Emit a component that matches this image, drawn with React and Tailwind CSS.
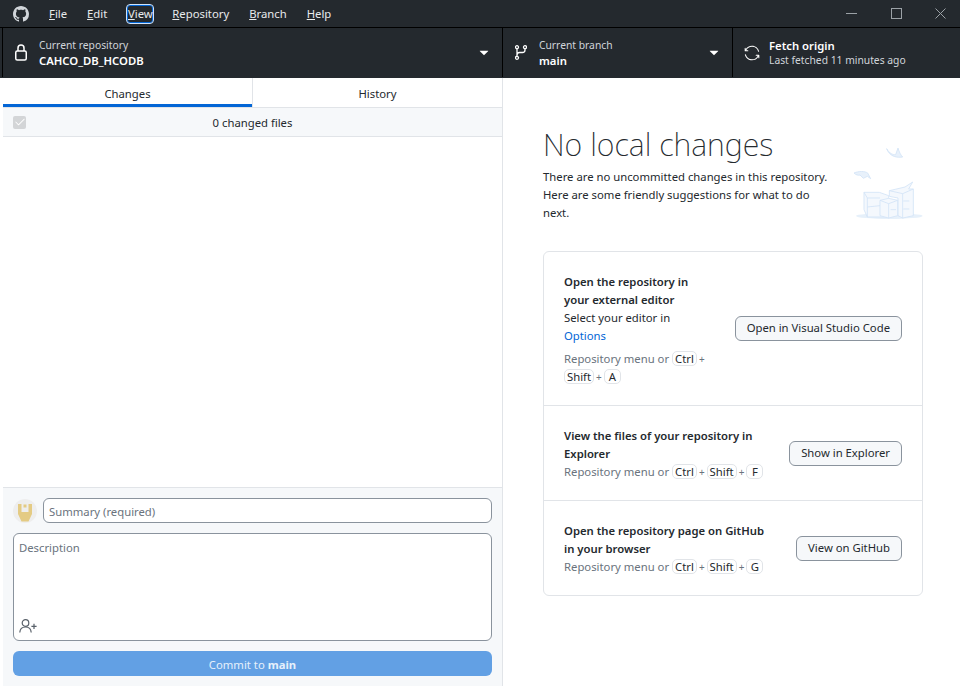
import React from 'react';
import { GoSync, GoTriangleDown, GoCheck } from 'react-icons/go';

const menus = [
  { first: 'F', rest: 'ile', cls: 'ml-[20px]' },
  { first: 'E', rest: 'dit', cls: 'ml-[20px]' },
  { first: 'V', rest: 'iew', cls: 'ml-[19px] w-[28px] h-[20px] justify-center border border-[#cfe3fa] rounded-[4px] shadow-[inset_0_0_0_1px_#0366d6]' },
  { first: 'R', rest: 'epository', cls: 'ml-[18px]' },
  { first: 'B', rest: 'ranch', cls: 'ml-[20px]' },
  { first: 'H', rest: 'elp', cls: 'ml-[20px]' },
];

const Key = ({ children }) => (
  <span className="inline-block min-w-[17px] text-center border border-[#e1e4e8] rounded-[5px] px-[2px] h-[15px] leading-[13px] text-[#24292e] bg-white">
    {children}
  </span>
);

const Plus = () => <span className="mx-[2px] text-[10px] text-[#6a737d]">+</span>;

const Shortcut = ({ keys, wrap }) => (
  <div className="text-[#6a737d] leading-[18px] whitespace-nowrap">
    Repository menu or <Key>Ctrl</Key>
    {keys.map((k, i) => (
      <React.Fragment key={k}>
        <Plus />
        {wrap && i === 0 ? <br /> : null}
        <Key>{k}</Key>
      </React.Fragment>
    ))}
  </div>
);

const Suggestion = ({ title, children, action, width, height, border }) => (
  <div className={`flex items-center justify-between px-[20px] ${height} ${border ? 'border-t border-[#e1e4e8]' : ''}`}>
    <div className={`${width} pt-[2px]`}>
      <div className="font-semibold text-[#24292e] leading-[18px]">{title}</div>
      {children}
    </div>
    <button className="h-[25px] px-[11px] border border-[#8a939d] rounded-[6px] bg-[#f6f8fa] text-[#24292e] whitespace-nowrap">
      {action}
    </button>
  </div>
);

// coordinates follow a 3x view of the drawing
const Illustration = () => (
  <svg width="73" height="80" viewBox="60 40 219 240" fill="none" stroke="#d3e3f6" strokeWidth="2.5" strokeLinejoin="round">
    <ellipse cx="178" cy="259" rx="100" ry="9" fill="#e6f0fa" stroke="none" />
    <path d="M170 57 C178 72 190 76 197 75 L204 55 C208 68 212 76 218 82 C205 84 180 84 170 57Z" fill="#e8f1fb" />
    <path d="M72 130 C85 124 105 124 113 130 L122 147 L112 140 L100 146 L90 136 C85 138 78 136 72 130Z" fill="#e8f1fb" />
    <path d="M102 188 L148 188 L176 198 L176 262 L112 262 L102 240 Z" fill="#f4f8fd" />
    <path d="M102 188 L112 205 L150 205 M112 205 L112 262 M112 232 L150 228" />
    <path d="M178 183 L225 172 L248 157 L236 178 L250 178 L250 258 L218 265 L204 258 L204 205 L178 200 Z" fill="#f4f8fd" />
    <path d="M178 183 L218 192 L250 178 M218 192 L218 265 M220 214 L238 214 M220 238 L238 238" />
    <path d="M150 212 L176 206 L203 212 L203 258 L176 265 L150 258 Z" fill="#f4f8fd" />
    <path d="M150 212 L176 222 L203 212 M176 222 L176 265 M182 240 L198 240" />
  </svg>
);

export default function App() {
  return (
    <div className="w-[960px] h-[686px] overflow-hidden flex flex-col bg-white text-[11.3px] font-['Noto_Sans','Open_Sans',sans-serif]">
      {/* title bar */}
      <div className="h-[27px] shrink-0 bg-[#24292e] flex items-center text-[#e8eaec]">
        <svg viewBox="0 0 16 16" fill="currentColor" className="ml-[13px] w-[16px] h-[16px] text-[#d1d5da]">
          <path d="M8 0C3.58 0 0 3.58 0 8c0 3.54 2.29 6.53 5.47 7.59.4.07.55-.17.55-.38 0-.19-.01-.82-.01-1.49-2.01.37-2.53-.49-2.69-.94-.09-.23-.48-.94-.82-1.13-.28-.15-.68-.52-.01-.53.63-.01 1.08.58 1.23.82.72 1.21 1.87.87 2.33.66.07-.52.28-.87.51-1.07-1.78-.2-3.64-.89-3.64-3.95 0-.87.31-1.59.82-2.15-.08-.2-.36-1.02.08-2.12 0 0 .67-.21 2.2.82.64-.18 1.32-.27 2-.27.68 0 1.36.09 2 .27 1.53-1.04 2.2-.82 2.2-.82.44 1.1.16 1.92.08 2.12.51.56.82 1.27.82 2.15 0 3.07-1.87 3.75-3.65 3.95.29.25.54.73.54 1.48 0 1.07-.01 1.93-.01 2.2 0 .21.15.46.55.38A8.013 8.013 0 0016 8c0-4.42-3.58-8-8-8z" />
        </svg>
        {menus.map((m) => (
          <span key={m.first} className={`${m.cls} flex items-center`}>
            <span className="pt-[1px]"><u>{m.first}</u>{m.rest}</span>
          </span>
        ))}
        <div className="ml-auto flex items-center text-[#9ba1a6]">
          <button className="w-[45px] h-[27px] flex items-center justify-center">
            <svg width="11" height="11" viewBox="0 0 11 11" stroke="currentColor"><path d="M0 5.5H11" /></svg>
          </button>
          <button className="w-[45px] h-[27px] flex items-center justify-center">
            <svg width="11" height="11" viewBox="0 0 11 11" fill="none" stroke="currentColor"><rect x="0.5" y="0.5" width="10" height="10" /></svg>
          </button>
          <button className="w-[41px] h-[27px] pl-[2px] flex items-center justify-center">
            <svg width="11" height="11" viewBox="0 0 11 11" stroke="currentColor"><path d="M0.5 0.5L10.5 10.5M10.5 0.5L0.5 10.5" /></svg>
          </button>
        </div>
      </div>

      {/* toolbar */}
      <div className="h-[51px] shrink-0 bg-[#24292e] border-t border-black flex text-white pl-[2px]">
        <div className="w-[501px] border-l border-black border-r flex items-center h-[49px]">
          <svg width="12" height="17" viewBox="0 0 12 17" fill="none" stroke="currentColor" strokeWidth="1.5" className="ml-[12px] shrink-0">
            <rect x="0.75" y="7" width="10.5" height="9" rx="1.5" />
            <path d="M3 7V4a3 3 0 016 0V7" />
          </svg>
          <div className="ml-[12px] flex-1">
            <div className="text-[10.3px] leading-[15px] text-[#d1d5da]">Current repository</div>
            <div className="font-semibold leading-[15px]">CAHCO_DB_HCODB</div>
          </div>
          <GoTriangleDown className="w-[16px] h-[16px] mr-[10px]" />
        </div>
        <div className="w-[230px] border-r border-black flex items-center h-[49px]">
          <svg width="12" height="15" viewBox="0 0 12 15" fill="none" stroke="currentColor" strokeWidth="1.3" className="ml-[12px] shrink-0">
            <circle cx="2" cy="2.2" r="1.5" />
            <circle cx="10" cy="2.2" r="1.5" />
            <circle cx="2" cy="12.8" r="1.5" />
            <path d="M2 3.7V11.3M10 3.7V5a2.5 2.5 0 01-2.5 2.5H4.5A2.5 2.5 0 002 10" />
          </svg>
          <div className="ml-[12px] flex-1">
            <div className="text-[10.3px] leading-[15px] text-[#d1d5da]">Current branch</div>
            <div className="font-semibold leading-[15px]">main</div>
          </div>
          <GoTriangleDown className="w-[16px] h-[16px] mr-[10px]" />
        </div>
        <div className="flex-1 flex items-center h-[49px]">
          <GoSync className="ml-[11px] w-[16px] h-[16px]" />
          <div className="ml-[9px]">
            <div className="font-semibold leading-[15px]">Fetch origin</div>
            <div className="text-[10.3px] leading-[15px] text-[#d1d5da]">Last fetched 11 minutes ago</div>
          </div>
        </div>
      </div>

      <div className="flex-1 flex min-h-0">
        {/* left pane */}
        <div className="ml-[3px] w-[500px] border-r border-[#e1e4e8] flex flex-col">
          <div className="flex h-[30px] border-b border-[#e1e4e8] text-[#24292e]">
            <div className="w-[249px] pt-[7px] border-b-[3px] border-[#0366d6] flex items-center justify-center">Changes</div>
            <div className="flex-1 border-l border-[#e1e4e8] flex items-center justify-center pt-[3px]">History</div>
          </div>
          <div className="h-[29px] bg-[#f6f8fa] border-b border-[#e1e4e8] flex items-center text-[#24292e]">
            <span className="ml-[10px] w-[13px] h-[13px] rounded-[2px] bg-[#d3d5d7] flex items-center justify-center text-white">
              <GoCheck className="w-[12px] h-[12px]" />
            </span>
            <span className="flex-1 text-center pr-[23px] pt-[3px]">0 changed files</span>
          </div>
          <div className="flex-1" />
          <div className="h-[199px] bg-[#f6f8fa] border-t border-[#e1e4e8] px-[10px] pt-[10px] flex flex-col">
            <div className="flex items-center gap-[6px]">
              <svg width="24" height="24" viewBox="0 0 24 24" className="shrink-0">
                <circle cx="12" cy="12" r="12" fill="#eeeeee" />
                <path d="M5 5H9V3H15V5H19V15L15.5 22.5H8.5L5 15Z" fill="#e4cb84" />
                <rect x="8.5" y="3" width="7" height="10" fill="#eeeeee" />
                <rect x="10.5" y="5.5" width="3" height="3" fill="#e4cb84" />
              </svg>
              <div className="flex-1 h-[25px] border border-[#8a939d] rounded-[6px] bg-white pl-[5px] pt-[4px] flex items-center text-[#6a737d]">Summary (required)</div>
            </div>
            <div className="mt-[10px] h-[108px] border border-[#8a939d] rounded-[6px] bg-white px-[5px] pt-[6px] flex flex-col justify-between text-[#6a737d]">
              <span>Description</span>
              <svg width="18" height="14" viewBox="0 0 18 14" fill="none" stroke="#586069" strokeWidth="1.2" className="mb-[7px]">
                <circle cx="6.5" cy="4" r="3.3" />
                <path d="M.8 13.5C1 9.5 3.5 8 6.5 8s5.5 1.5 5.7 5.5M15 4.8V10M12.4 7.4H17.6" />
              </svg>
            </div>
            <button className="mt-[10px] h-[25px] pt-[3px] rounded-[6px] bg-[#62a0e4] text-[#e6f0fb]">
              Commit to <span className="font-bold">main</span>
            </button>
          </div>
        </div>

        {/* right pane */}
        <div className="flex-1 pl-[40px] pr-[37px] pt-[46px]">
          <div className="flex justify-between">
            <div className="w-[292px]">
              <h1 className="text-[30.4px] font-extralight leading-[42px] text-[#24292e]">No local changes</h1>
              <p className="mt-[2px] leading-[18px] text-[#24292e]">
                There are no uncommitted changes in this repository. Here are some friendly suggestions for what to do next.
              </p>
            </div>
            <div className="pt-[19px]"><Illustration /></div>
          </div>
          <div className="mt-[28px] border border-[#e1e4e8] rounded-[6px]">
            <Suggestion title="Open the repository in your external editor" action="Open in Visual Studio Code" width="w-[150px]" height="h-[153px]">
              <div className="text-[#24292e] leading-[18px]">Select your editor in <span className="text-[#0366d6]">Options</span></div>
              <div className="mt-[5px]"><Shortcut keys={['Shift', 'A']} wrap /></div>
            </Suggestion>
            <Suggestion border title="View the files of your repository in Explorer" action="Show in Explorer" width="w-[205px]" height="h-[95px]">
              <Shortcut keys={['Shift', 'F']} />
            </Suggestion>
            <Suggestion border title="Open the repository page on GitHub in your browser" action="View on GitHub" width="w-[210px]" height="h-[95px]">
              <Shortcut keys={['Shift', 'G']} />
            </Suggestion>
          </div>
        </div>
      </div>
    </div>
  );
}
